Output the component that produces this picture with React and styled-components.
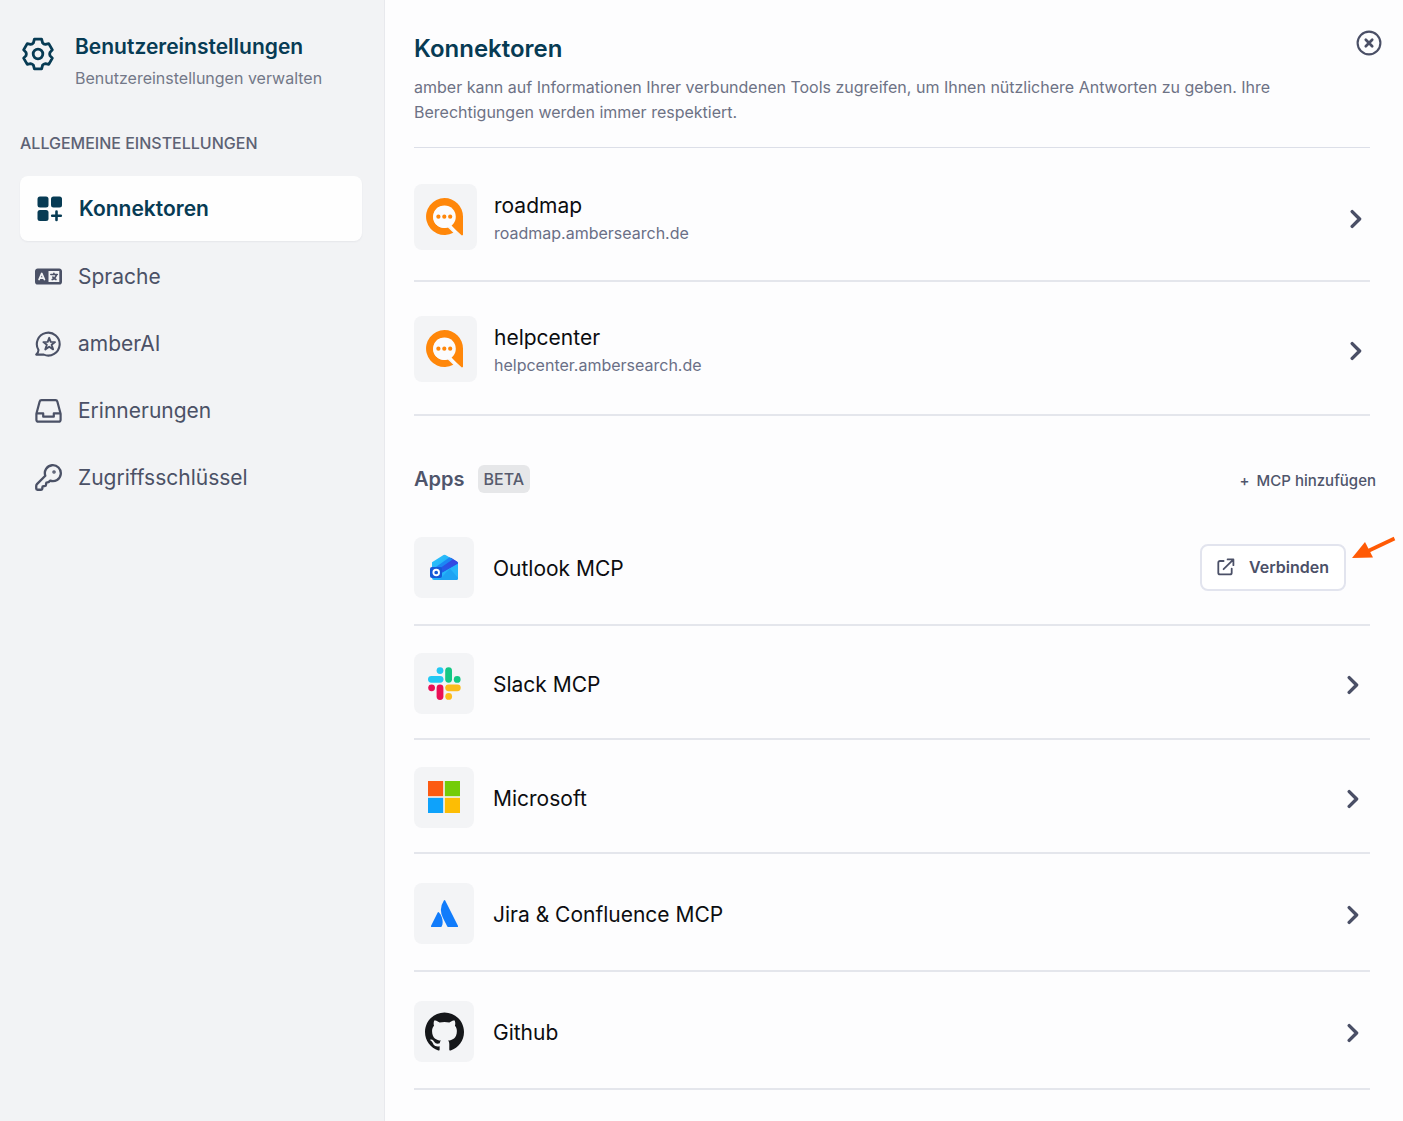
import styled, { createGlobalStyle } from "styled-components";
import { FaLanguage } from "react-icons/fa6";
import { SiAtlassian, SiGithub } from "react-icons/si";
import { KeyRound } from "lucide-react";

const GlobalStyle = createGlobalStyle`
  * {
    box-sizing: border-box;
  }

  body {
    margin: 0;
    background: #fdfdfe;
    color: #0c0d10;
    font-family: Inter, "Liberation Sans", sans-serif;
  }

  h1, h2, h3, p, ul {
    margin: 0;
    padding: 0;
  }

  ul {
    list-style: none;
  }

  button {
    font-family: inherit;
    cursor: pointer;
  }

  svg {
    display: block;
    flex-shrink: 0;
  }
`;

const GearIcon = () => (
  <svg
    width="36"
    height="36"
    viewBox="-18 -18 36 36"
    fill="none"
    stroke="currentColor"
    strokeWidth="2.8"
    strokeLinejoin="round"
  >
    <path d="M-3.600-14.800H3.600L4.600-11.200Q5.650-9.800 7.400-9.580L10.760-10.370 14.360-4.130 12-1.620Q11.300 0 12 1.620L14.360 4.130 10.760 10.370 7.400 9.580Q5.650 9.800 4.600 11.200L3.600 14.800H-3.600L-4.600 11.200Q-5.650 9.800-7.400 9.580L-10.760 10.370-14.360 4.130-12 1.620Q-11.300 0-12-1.620L-14.360-4.130-10.760-10.370-7.400-9.580Q-5.650-9.800-4.600-11.200Z" />
    <circle r="4.800" />
  </svg>
);

const GridPlusIcon = () => (
  <svg width="26" height="26" viewBox="0 0 26 26" fill="currentColor">
    <rect x="0.5" y="0.5" width="11" height="11" rx="2.5" />
    <rect x="14" y="0.5" width="11" height="11" rx="2.5" />
    <rect x="0.5" y="14" width="11" height="11" rx="2.5" />
    <path
      d="M19.5 15.500v8.500M15.200 19.700h8.600"
      stroke="currentColor"
      strokeWidth="2.6"
      strokeLinecap="round"
    />
  </svg>
);

const ChatStarIcon = () => (
  <svg
    width="27"
    height="26"
    viewBox="0 0 27 26"
    fill="none"
    stroke="currentColor"
    strokeWidth="2.1"
    strokeLinejoin="round"
  >
    <path d="M1.200 23.600c1.500-1.200 2.200-2.600 2.300-4.600A11.400 11.400 0 1 1 8.800 23.600Z" />
    <path
      d="m14.200 6.800 1.500 4.100 4.300.2-3.400 2.700 1.500 4.600-3.900-2.600-3.900 2.600 1.500-4.600-3.400-2.700 4.300-.2z"
      strokeWidth="1.900"
    />
  </svg>
);

const InboxIcon = () => (
  <svg
    width="27"
    height="26"
    viewBox="0 0 27 26"
    fill="none"
    stroke="currentColor"
    strokeWidth="2.200"
    strokeLinejoin="round"
  >
    <path d="M6.600 2.200h13.800a2 2 0 0 1 2 1.500l3.200 12.100v5.900a2 2 0 0 1-2 2H3.400a2 2 0 0 1-2-2v-5.900L4.600 3.700a2 2 0 0 1 2-1.500Z" />
    <path d="M1.600 15.400h6.600v3.300h10.600v-3.300h6.600" />
  </svg>
);

const ChevronIcon = () => (
  <svg
    width="12"
    height="20"
    viewBox="0 0 12 20"
    fill="none"
    stroke="currentColor"
    strokeWidth="3.400"
    strokeLinecap="round"
    strokeLinejoin="round"
  >
    <path d="m2.200 2.600 7.400 7.400-7.400 7.400" />
  </svg>
);

const CloseIcon = () => (
  <svg
    width="26"
    height="26"
    viewBox="0 0 26 26"
    fill="none"
    stroke="currentColor"
    strokeLinecap="round"
  >
    <circle cx="13" cy="13" r="11.400" strokeWidth="2.100" />
    <path d="m9.800 9.800 6.400 6.400m0-6.400-6.400 6.400" strokeWidth="2.700" />
  </svg>
);

const ExternalIcon = () => (
  <svg
    width="18"
    height="18"
    viewBox="0 0 18 18"
    fill="none"
    stroke="currentColor"
    strokeWidth="1.800"
    strokeLinecap="round"
    strokeLinejoin="round"
  >
    <path d="M6.600 3H3a1.700 1.700 0 0 0-1.700 1.700v10A1.700 1.700 0 0 0 3 16.400h10a1.700 1.700 0 0 0 1.700-1.700V10.600" />
    <path d="M10.600 1.400h5.800v5.800M16 1.800l-9.400 9.400" />
  </svg>
);

const AmberLogo = () => (
  <svg width="40" height="38" viewBox="0 0 40 38">
    <path
      d="M18.500 0A18.500 18.500 0 0 1 37 18.500V36.300a1 1 0 0 1-1.700.8L25 27.400A11 11 0 1 0 21.600 29.300L27.300 34.800A18.500 18.500 0 1 1 18.500 0Z"
      fill="#ff870a"
    />
    <circle cx="18.500" cy="18.800" r="11.300" fill="#fcfcfd" />
    <path d="m23 26.500 7 8" stroke="#fcfcfd" strokeWidth="2.600" />
    <g fill="#ff870a">
      <circle cx="12.400" cy="18.700" r="2.100" />
      <circle cx="18.300" cy="18.700" r="2.100" />
      <circle cx="24.200" cy="18.700" r="2.100" />
    </g>
  </svg>
);

const OutlookLogo = () => (
  <svg width="28" height="28" viewBox="0 0 28 28">
    <defs>
      <linearGradient id="mailBody" x1="0" y1="0" x2="1" y2="1">
        <stop offset="0" stopColor="#2cc4fb" />
        <stop offset="1" stopColor="#1a9cf5" />
      </linearGradient>
      <linearGradient id="mailFold" x1="0" y1="1" x2="1" y2="0">
        <stop offset="0" stopColor="#1567ea" />
        <stop offset="1" stopColor="#3d3fdf" />
      </linearGradient>
    </defs>
    <path
      d="M2 9.200 13.500 2a2 2 0 0 1 2 0L28 9.200V25a2 2 0 0 1-2 2H4a2 2 0 0 1-2-2Z"
      fill="url(#mailBody)"
    />
    <path d="m3 19 18-14.200 6 3.600a2 2 0 0 1 .6 2.600L11 20.500Z" fill="url(#mailFold)" />
    <path d="m8 16.600 15-10.300-3.400-2L4.500 15Z" fill="#1b87f4" />
    <path d="M11 20.500 28 10.800V25a2 2 0 0 1-2 2H9Z" fill="#25b4fa" />
    <path d="M9 27 20 15.500 28 25a2 2 0 0 1-2 2Z" fill="#168bea" opacity=".45" />
    <rect x="0" y="14" width="12" height="11" rx="2" fill="#1458d8" />
    <circle cx="6.200" cy="19.500" r="2.800" fill="none" stroke="#fff" strokeWidth="1.900" />
  </svg>
);

const SlackLogo = () => (
  <svg width="33" height="33" viewBox="0 0 33 33">
    <g fill="#22c8f3">
      <circle cx="12" cy="3.600" r="3.400" />
      <rect x="0" y="8.900" width="15.500" height="6.800" rx="3.400" />
    </g>
    <g fill="#14c784">
      <rect x="17.200" y="0.200" width="6.800" height="15.500" rx="3.400" />
      <circle cx="29.200" cy="12.400" r="3.400" />
    </g>
    <g fill="#fcbc1c">
      <rect x="17.200" y="17.400" width="15.500" height="6.800" rx="3.400" />
      <circle cx="20.700" cy="29.400" r="3.400" />
    </g>
    <g fill="#ea0f56">
      <circle cx="3.600" cy="20.800" r="3.400" />
      <rect x="8.600" y="17.400" width="6.800" height="15.500" rx="3.400" />
    </g>
  </svg>
);

const MicrosoftLogo = () => (
  <svg width="32" height="32" viewBox="0 0 32 32">
    <path fill="#fc5a12" d="M0 0h15.200v15.200H0z" />
    <path fill="#74cc08" d="M16.800 0H32v15.200H16.800z" />
    <path fill="#0ea2fb" d="M0 16.800h15.200V32H0z" />
    <path fill="#fdbd04" d="M16.800 16.800H32V32H16.800z" />
  </svg>
);

const PointerArrow = () => (
  <svg width="44" height="24" viewBox="0 0 44 24" fill="#ff5a05">
    <path d="m0 22 13-16 8 15.600z" />
    <path d="M15 15.500 42.500 2.500" stroke="#ff5a05" strokeWidth="3.600" />
  </svg>
);

const NAV_ITEMS = [
  { label: "Konnektoren", icon: <GridPlusIcon />, active: true },
  { label: "Sprache", icon: <FaLanguage size={27} /> },
  { label: "amberAI", icon: <ChatStarIcon /> },
  { label: "Erinnerungen", icon: <InboxIcon /> },
  {
    label: "Zugriffsschlüssel",
    icon: <KeyRound size={27} viewBox="1 1 22 22" strokeWidth={1.9} />,
  },
];

const CONNECTORS = [
  { name: "roadmap", domain: "roadmap.ambersearch.de", height: 130 },
  { name: "helpcenter", domain: "helpcenter.ambersearch.de", height: 134 },
];

const APPS = [
  { name: "Outlook MCP", logo: <OutlookLogo />, height: 118, connect: true },
  { name: "Slack MCP", logo: <SlackLogo />, height: 114 },
  { name: "Microsoft", logo: <MicrosoftLogo />, height: 114 },
  {
    name: "Jira & Confluence MCP",
    logo: <SiAtlassian size={27} color="#117cfb" />,
    height: 118,
  },
  { name: "Github", logo: <SiGithub size={39} color="#15171a" />, height: 118 },
];

const App = () => {
  return (
    <Page>
      <GlobalStyle />
      <Sidebar>
        <SidebarHeader>
          <GearIcon />
          <div>
            <SidebarTitle>Benutzereinstellungen</SidebarTitle>
            <SidebarText>Benutzereinstellungen verwalten</SidebarText>
          </div>
        </SidebarHeader>
        <SectionLabel>ALLGEMEINE EINSTELLUNGEN</SectionLabel>
        <Nav>
          {NAV_ITEMS.map(({ label, icon, active }) => (
            <NavLink key={label} href="#" $active={active}>
              {icon}
              {label}
            </NavLink>
          ))}
        </Nav>
      </Sidebar>
      <Main>
        <Header>
          <div>
            <Title>Konnektoren</Title>
            <Description>
              amber kann auf Informationen Ihrer verbundenen Tools zugreifen, um
              Ihnen nützlichere Antworten zu geben. Ihre Berechtigungen werden
              immer respektiert.
            </Description>
          </div>
          <CloseButton aria-label="Schließen">
            <CloseIcon />
          </CloseButton>
        </Header>
        <ConnectorList>
          {CONNECTORS.map(({ name, domain, height }) => (
            <Row key={name} $height={height}>
              <Tile $large>
                <AmberLogo />
              </Tile>
              <RowText>
                <RowName>{name}</RowName>
                <RowDomain>{domain}</RowDomain>
              </RowText>
              <OpenButton aria-label={`${name} öffnen`}>
                <ChevronIcon />
              </OpenButton>
            </Row>
          ))}
        </ConnectorList>
        <AppsHeader>
          <AppsTitle>Apps</AppsTitle>
          <Badge>BETA</Badge>
          <AddButton>
            <span>+</span>
            MCP hinzufügen
          </AddButton>
        </AppsHeader>
        <ul>
          {APPS.map(({ name, logo, height, connect }) => (
            <Row key={name} $height={height}>
              <Tile>{logo}</Tile>
              <RowText>
                <RowName>{name}</RowName>
              </RowText>
              {connect ? (
                <ConnectButton>
                  <ExternalIcon />
                  Verbinden
                  <Pointer>
                    <PointerArrow />
                  </Pointer>
                </ConnectButton>
              ) : (
                <OpenButton aria-label={`${name} öffnen`} $inset>
                  <ChevronIcon />
                </OpenButton>
              )}
            </Row>
          ))}
        </ul>
      </Main>
    </Page>
  );
};
export default App;

const Page = styled.div`
  display: flex;
  min-height: 100vh;
`;

const Sidebar = styled.aside`
  flex: 0 0 385px;
  padding: 32px 22px 32px 20px;
  background: #f2f3f5;
  border-right: 1px solid #e8e9ed;
`;

const SidebarHeader = styled.div`
  display: flex;
  gap: 19px;
  color: #073b54;

  > svg {
    margin-top: 4px;
  }
`;

const SidebarTitle = styled.h2`
  font-size: 21px;
  font-weight: 600;
  line-height: 30px;
`;

const SidebarText = styled.p`
  color: #737888;
  font-size: 16px;
  line-height: 32px;
`;

const SectionLabel = styled.h3`
  margin-top: 36px;
  color: #5d6274;
  font-size: 16px;
  font-weight: 500;
  line-height: 26px;
`;

const Nav = styled.nav`
  display: flex;
  flex-direction: column;
  gap: 4px;
  margin-top: 20px;
`;

const NavLink = styled.a`
  display: flex;
  align-items: center;
  gap: 16px;
  min-height: ${({ $active }) => ($active ? "65px" : "63px")};
  padding: 0 ${({ $active }) => ($active ? "17px" : "15px")};
  border-radius: 8px;
  background: ${({ $active }) => ($active ? "#fefefe" : "transparent")};
  box-shadow: ${({ $active }) =>
    $active ? "0 1px 2px rgba(30, 40, 70, 0.06)" : "none"};
  color: ${({ $active }) => ($active ? "#073b54" : "#4b5166")};
  font-size: 21px;
  font-weight: ${({ $active }) => ($active ? 600 : 400)};
  text-decoration: none;
`;

const Main = styled.main`
  flex: 1;
  min-width: 0;
  padding: 30px 33px 30px 29px;
`;

const Header = styled.header`
  display: flex;
  align-items: flex-start;
  justify-content: space-between;
  padding-bottom: 22px;
  border-bottom: 1px solid #dcdfe8;
`;

const Title = styled.h1`
  color: #073b54;
  font-size: 24px;
  font-weight: 600;
  line-height: 38px;
`;

const Description = styled.p`
  max-width: 880px;
  margin-top: 7px;
  color: #6d7285;
  font-size: 16px;
  line-height: 25px;
`;

const ConnectorList = styled.ul`
  padding-top: 4px;
`;

const Row = styled.li`
  display: flex;
  align-items: center;
  min-height: ${({ $height }) => $height}px;
  padding-top: 2px;
  border-bottom: 2px solid #e4e6ec;
`;

const Tile = styled.div`
  display: flex;
  flex-shrink: 0;
  align-items: center;
  justify-content: center;
  width: ${({ $large }) => ($large ? "63px" : "60px")};
  height: ${({ $large }) => ($large ? "66px" : "61px")};
  margin-right: ${({ $large }) => ($large ? "17px" : "19px")};
  border-radius: 8px;
  background: #f3f4f6;
`;

const RowText = styled.div`
  padding-top: 4px;
`;

const RowName = styled.p`
  font-size: 21px;
  line-height: 28px;
`;

const RowDomain = styled.p`
  color: #6a6f86;
  font-size: 16px;
  line-height: 27px;
`;

const IconButton = styled.button`
  display: flex;
  padding: 0;
  border: 0;
  background: none;
  color: #4a4f66;
`;

const CloseButton = styled(IconButton)`
  margin-right: -12px;
`;

const OpenButton = styled(IconButton)`
  margin-left: auto;
  padding: 3px ${({ $inset }) => ($inset ? "11px" : "8px")} 0;
`;

const AppsHeader = styled.div`
  display: flex;
  align-items: center;
  margin: 49px -6px 15px 0;
`;

const AppsTitle = styled.h2`
  color: #4f556b;
  font-size: 20px;
  font-weight: 600;
  line-height: 28px;
`;

const Badge = styled.span`
  margin-left: 13px;
  padding: 0 6px;
  border-radius: 6px;
  background: #e6e7e9;
  color: #565b6d;
  font-size: 16px;
  font-weight: 500;
  line-height: 28px;
`;

const AddButton = styled.button`
  display: flex;
  gap: 7px;
  margin-left: auto;
  padding: 2px 0 0;
  border: 0;
  background: none;
  color: #4f556b;
  font-size: 15px;
  font-weight: 500;
`;

const ConnectButton = styled.button`
  position: relative;
  display: flex;
  align-items: center;
  gap: 14px;
  height: 47px;
  margin-left: auto;
  margin-right: 24px;
  padding: 0 15px;
  border: 2px solid #e2e4ee;
  border-radius: 8px;
  background: #fff;
  color: #4b5067;
  font-size: 16px;
  font-weight: 600;
`;

const Pointer = styled.span`
  position: absolute;
  top: -10px;
  left: calc(100% + 8px);
`;
